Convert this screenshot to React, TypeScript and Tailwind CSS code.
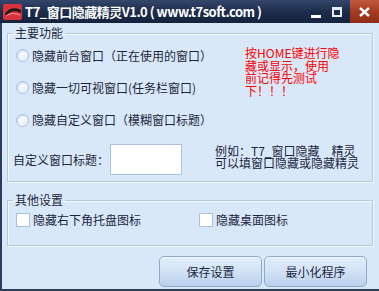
import React from "react";

const font = { fontFamily: '"Noto Sans CJK SC", "Liberation Sans", sans-serif' };

function Radio({ label }: { label: string }) {
  return (
    <label className="flex items-center gap-[3px]">
      <span className="w-[13px] h-[13px] rounded-full border border-[#a9c1de] bg-gradient-to-br from-white to-[#e3edf8] shadow-[inset_1px_1px_1px_#c6d6ea]" />
      <span>{label}</span>
    </label>
  );
}

function Check({ label }: { label: string }) {
  return (
    <label className="flex items-center gap-[3px]">
      <span className="w-[14px] h-[14px] border border-[#a9c1de] bg-white" />
      <span>{label}</span>
    </label>
  );
}

function Group({ title, children, className }: { title: string; children: React.ReactNode; className?: string }) {
  return (
    <fieldset
      className={`border border-[#b3c8e1] shadow-[inset_1px_1px_0_#f7fbff,1px_1px_0_#f7fbff] mx-0 ${className ?? ""}`}
    >
      <legend className="ml-[5px] px-[2px] leading-[14px] text-[12px]">{title}</legend>
      {children}
    </fieldset>
  );
}

function Button({ children }: { children: React.ReactNode }) {
  return (
    <button className="w-[103px] h-[31px] rounded-[5px] border border-[#8fa9cc] bg-gradient-to-b from-[#e3eefa] via-[#d2e2f5] to-[#b9d0ec] text-[12px] text-[#1c2740] shadow-[inset_0_1px_0_#f4f8fd]">
      {children}
    </button>
  );
}

export default function App() {
  return (
    <div className="w-[379px] h-[291px] overflow-hidden flex flex-col bg-[#d9e8f8] text-[#1c2640]" style={font}>
      {/* title bar */}
      <div className="h-[23px] flex items-center bg-gradient-to-b from-[#34476b] via-[#1d2d4c] to-[#14223d] text-white">
        <svg width="20" height="18" viewBox="0 0 20 18" className="ml-[3px]">
          <rect x="0" y="1" width="19" height="16" rx="2" fill="#d8323a" />
          <path d="M2 11 C5 5 12 4 18 7 L18 10 C12 7 7 8 3 13 Z" fill="#1a1a1a" />
          <path d="M3 13 C7 10 12 10 17 12" stroke="#f4a0a0" strokeWidth="1" fill="none" />
        </svg>
        <span className="ml-[2px] text-[13px] font-bold leading-none tracking-[-0.5px]">T7_窗口隐藏精灵V1.0 ( www.t7soft.com )</span>
        <div className="ml-auto flex items-center h-full">
          <span className="w-[10px] h-[3px] bg-white mt-[9px] mr-[11px]" />
          <span className="w-[10px] h-[10px] border-[2px] border-t-[3px] border-[#e8eef7] mr-[8px]" />
          <div className="w-[29px] h-full flex items-center justify-center bg-gradient-to-b from-[#c05a3e] via-[#a53c22] to-[#8e2c16]">
            <svg width="11" height="10" viewBox="0 0 11 10">
              <path d="M1 1 L10 9 M10 1 L1 9" stroke="white" strokeWidth="2.4" />
            </svg>
          </div>
        </div>
      </div>

      {/* body */}
      <div className="flex-1 flex flex-col border-l-[2px] border-b-[2px] border-[#2b3c5c] pl-[5px] pr-[6px]">
        <Group title="主要功能" className="mt-[3px] pb-[6px] text-[12px] leading-[12px]">
          <div className="flex">
            <div className="w-[237px] pl-[8px] flex flex-col">
              <div className="h-[31px] flex items-center"><Radio label="隐藏前台窗口（正在使用的窗口）" /></div>
              <div className="h-[33px] flex items-center"><Radio label="隐藏一切可视窗口(任务栏窗口)" /></div>
              <div className="h-[32px] flex items-center"><Radio label="隐藏自定义窗口（模糊窗口标题）" /></div>
            </div>
            <div className="pt-[7px] text-[#ff0000] leading-[12.5px]">
              按HOME键进行隐<br />藏或显示，使用<br />前记得先测试<br />下！！！
            </div>
          </div>
          <div className="flex mt-[8px]">
            <div className="w-[102px] pl-[5px] flex items-center">自定义窗口标题：</div>
            <div className="w-[72px] h-[31px] border border-[#a9c1de] bg-white" />
            <div className="ml-[33px] mt-[1px] leading-[12px]">
              例如：T7_窗口隐藏　精灵<br />可以填窗口隐藏或隐藏精灵
            </div>
          </div>
        </Group>

        <Group title="其他设置" className="mt-[11px] pb-[18px] text-[12px] leading-[12px]">
          <div className="flex mt-[6px] pl-[8px]">
            <div className="w-[183px]"><Check label="隐藏右下角托盘图标" /></div>
            <Check label="隐藏桌面图标" />
          </div>
        </Group>

        <div className="flex justify-end gap-[2px] mt-[10px] pr-[6px]">
          <Button>保存设置</Button>
          <Button>最小化程序</Button>
        </div>
      </div>
    </div>
  );
}
